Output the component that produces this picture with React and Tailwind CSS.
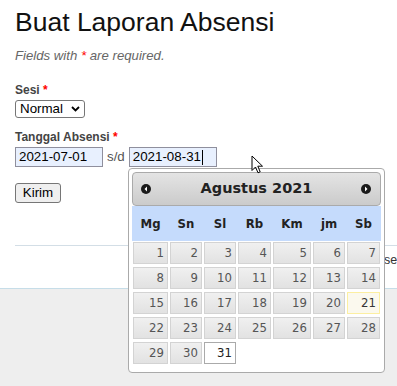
import React from "react";

const cols = "grid grid-cols-[35px_32px_32px_33px_38px_32px_33px] gap-x-[2px]";
const dayNames = ["Mg", "Sn", "Sl", "Rb", "Km", "jm", "Sb"];

const weeks = [
  [1, 2, 3, 4, 5, 6, 7],
  [8, 9, 10, 11, 12, 13, 14],
  [15, 16, 17, 18, 19, 20, 21],
  [22, 23, 24, 25, 26, 27, 28],
  [29, 30, 31, null, null, null, null],
];

const DayCell = ({ day }) => {
  if (!day) return <div />;
  let cls =
    "border-[#d3d3d3] bg-linear-to-b from-[#f0f0f0] to-[#e2e2e2] text-[#555]";
  if (day === 21) cls = "border-[#fcefa1] bg-[#fbf9ee] text-[#363636]";
  if (day === 31) cls = "border-[#aaaaaa] bg-white text-[#212121]";
  return (
    <div
      className={`h-[22px] border flex items-center justify-end pr-[3px] text-[13px] ${cls}`}
    >
      {day}
    </div>
  );
};

const NavIcon = ({ dir }) => (
  <svg width="10" height="10" viewBox="0 0 10 10">
    <circle cx="5" cy="5" r="5" fill="#1a1a1a" />
    {dir === "prev" ? (
      <polygon points="6,2.5 3.5,5 6,7.5" fill="#fff" />
    ) : (
      <polygon points="4,2.5 6.5,5 4,7.5" fill="#fff" />
    )}
  </svg>
);

const DatePicker = () => (
  <div className="absolute left-[128px] top-[168px] w-[257px] h-[205px] border border-[#aaaaaa] rounded-[4px] bg-white p-[3px] font-['DejaVu_Sans_Condensed','DejaVu_Sans',sans-serif]">
    <div className="relative h-[34px] rounded-[4px] border border-[#aaaaaa] bg-linear-to-b from-[#e4e4e4] to-[#cbcbcb] flex items-center justify-center">
      <span className="absolute left-[8px] top-[11px] flex">
        <NavIcon dir="prev" />
      </span>
      <span className="font-['DejaVu_Sans',sans-serif] font-bold text-[14.5px] text-[#222]">
        Agustus 2021
      </span>
      <span className="absolute right-[9px] top-[11px] flex">
        <NavIcon dir="next" />
      </span>
    </div>
    <div className={`${cols} h-[35px] bg-[#c5dbfc] pl-px items-center`}>
      {dayNames.map((d) => (
        <div key={d} className="text-center font-bold text-[13px] text-[#222]">
          {d}
        </div>
      ))}
    </div>
    <div className={`${cols} gap-y-[3px] pl-px mt-[1px]`}>
      {weeks.flat().map((d, i) => (
        <DayCell key={i} day={d} />
      ))}
    </div>
  </div>
);

const Cursor = () => (
  <svg
    className="absolute left-[251px] top-[155px]"
    width="13"
    height="20"
    viewBox="0 0 13 20"
  >
    <path
      d="M1 1 L1 15.5 L4.5 12 L7 17.8 L9.2 16.8 L6.8 11.2 L11.5 11.2 Z"
      fill="#fff"
      stroke="#000"
      strokeWidth="1"
      strokeLinejoin="round"
    />
  </svg>
);

export default function App() {
  return (
    <div className="relative w-[397px] h-[386px] overflow-hidden bg-white flex flex-col font-['Liberation_Sans',Arial,sans-serif] text-[#333]">
      <div className="px-[15px] pt-[7px]">
        <h1 className="text-[26.5px] leading-[30px] text-[#111]">
          Buat Laporan Absensi
        </h1>
        <p className="mt-[11px] text-[13.2px] leading-[15px] italic text-[#666]">
          Fields with <span className="text-[#f00]">*</span> are required.
        </p>

        <div className="mt-[20px] text-[12px] leading-[14px] font-bold text-[#444]">
          Sesi <span className="text-[#f00]">*</span>
        </div>
        <div className="mt-[3px] w-[70px] h-[18px] border border-[#767676] rounded-[3px] flex items-center justify-between pl-[4px] pr-[4px] text-[13.33px] text-black">
          <span>Normal</span>
          <svg width="9" height="6" viewBox="0 0 9 6">
            <path d="M1 1 L4.5 4.5 L8 1" fill="none" stroke="#000" strokeWidth="1.8" />
          </svg>
        </div>

        <div className="mt-[12px] text-[12px] leading-[14px] font-bold text-[#444]">
          Tanggal Absensi <span className="text-[#f00]">*</span>
        </div>
        <div className="mt-[3px] flex items-center text-[13.33px] text-black">
          <div className="w-[88px] h-[20px] border border-[#8f8f9d] bg-[#e8f0fe] flex items-center pl-[3px]">
            2021-07-01
          </div>
          <span className="ml-[4px] mr-[4px] text-[#555]">s/d</span>
          <div className="w-[88px] h-[20px] border border-[#8f8f9d] bg-[#e8f0fe] flex items-center pl-[3px]">
            2021-08-31
            <span className="ml-[1px] w-px h-[15px] bg-black" />
          </div>
        </div>

        <button className="mt-[16px] w-[46px] h-[20px] border border-[#767676] rounded-[3px] bg-[#efefef] text-[13.33px] text-black flex items-center justify-center">
          Kirim
        </button>
      </div>

      <div className="mt-[42px] ml-[15px] h-px bg-[#d3dee6]" />
      <div className="h-[42px] pt-[7px] pl-[384px] text-[12.5px] leading-[15px] whitespace-nowrap text-[#333]">
        se
      </div>
      <div className="flex-1 border-t border-[#c6dde8] bg-[#eeeeee]" />

      <DatePicker />
      <Cursor />
    </div>
  );
}
